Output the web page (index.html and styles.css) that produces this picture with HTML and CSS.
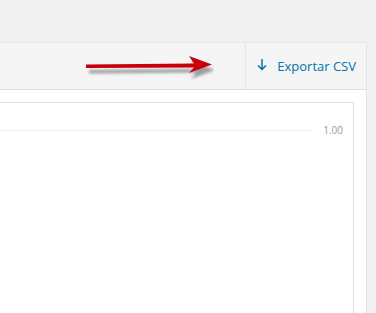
FILE: index.html
```html
<!DOCTYPE html>
<html lang="es">
<head>
    <meta charset="UTF-8">
    <title>Exportar CSV</title>
    <link rel="stylesheet" href="styles.css">
</head>
<body>

    <div class="panel">
        <div class="panel-header">
            <svg class="pointer" width="130" height="30" viewBox="0 0 130 30">
                <defs>
                    <filter id="sh" x="-10%" y="-50%" width="130%" height="200%">
                        <feGaussianBlur stdDeviation="1.6"/>
                    </filter>
                </defs>
                <path d="M4 14 L111 13 L106 5 L130 14 L106 23 L111 16.5 L4 17.5 Z" fill="#555" opacity="0.55" filter="url(#sh)" transform="translate(1,3)"/>
                <path d="M2 11.5 L110 10.5 L105 3 L128 11.5 L105 20 L110 14.5 L2 15 Z" fill="#c8000a"/>
            </svg>
            <a class="export" href="#">
                <svg class="export-icon" width="10" height="13" viewBox="0 0 10 13">
                    <path d="M5 1 V11.5 M1 7.5 L5 11.5 L9 7.5" fill="none" stroke="#0073aa" stroke-width="1.5"/>
                </svg>
                Exportar CSV
            </a>
        </div>
        <div class="panel-body">
            <div class="chart">
                <div class="grid-row">
                    <span class="grid-line"></span>
                    <span class="grid-label">1.00</span>
                </div>
            </div>
        </div>
    </div>

</body>
</html>
```

FILE: styles.css
```css
body {
    margin: 0;
    font-family: 'Open Sans', 'Noto Sans', sans-serif;
    background-color: #f1f1f1;
    height: 313px;
    overflow: hidden;
}

.panel {
    margin: 42px 9px 0 -1px;
    border: 1px solid #e5e5e5;
    border-bottom: none;
    height: 271px;
    display: flex;
    flex-direction: column;
}

.panel-header {
    display: flex;
    justify-content: flex-end;
    align-items: stretch;
    height: 46px;
    background-color: #f5f5f5;
    border-bottom: 1px solid #dcdcdc;
}

.pointer {
    align-self: center;
    margin-right: 31px;
    margin-top: 3px;
}

.export {
    display: flex;
    align-items: center;
    gap: 10px;
    padding: 0 10px 1px 11px;
    border-left: 1px solid #e5e5e5;
    color: #0073aa;
    text-decoration: none;
    font-size: 13px;
}

.export-icon {
    margin-top: -2px;
}

.panel-body {
    flex: 1;
    background-color: #fff;
    padding: 12px 12px 0 0;
}

.chart {
    height: 100%;
    border: 1px solid #dedede;
    border-left: none;
    border-bottom: none;
    box-sizing: border-box;
    padding: 20px 10px 0 0;
}

.grid-row {
    display: flex;
    align-items: center;
    gap: 10px;
}

.grid-line {
    flex: 1;
    border-top: 1px solid #eeeeee;
}

.grid-label {
    font-size: 10px;
    color: #999;
}
```
